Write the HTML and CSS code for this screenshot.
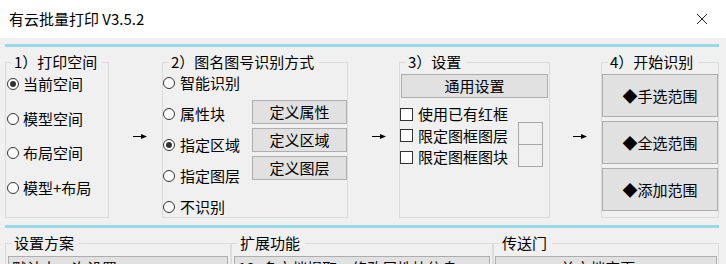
FILE: index.html
```html
<!DOCTYPE html>
<html lang="zh">
<head>
<meta charset="utf-8">
<title>有云批量打印 V3.5.2</title>
<link rel="stylesheet" href="styles.css">
</head>
<body>
<div class="titlebar">
  <span class="title">有云批量打印 V3.5.2</span>
  <svg class="close" width="12" height="12" viewBox="0 0 12 12"><path d="M1 1L11 11M11 1L1 11" stroke="#222" stroke-width="1" fill="none"/></svg>
</div>
<div class="sep"></div>
<div class="main">
  <fieldset class="grp g1">
    <legend>1）打印空间</legend>
    <div class="radios r1">
      <label class="radio on"><i></i>当前空间</label>
      <label class="radio"><i></i>模型空间</label>
      <label class="radio"><i></i>布局空间</label>
      <label class="radio"><i></i>模型+布局</label>
    </div>
  </fieldset>
  <div class="arrow a1"><svg width="14" height="7" viewBox="0 0 14 7"><path d="M0 3.5H10" stroke="#000" stroke-width="1"/><path d="M8 1L14 3.5L8 6Z" fill="#000"/></svg></div>
  <fieldset class="grp g2">
    <legend>2）图名图号识别方式</legend>
    <div class="g2body">
      <div class="radios r2">
        <label class="radio"><i></i>智能识别</label>
        <label class="radio"><i></i>属性块</label>
        <label class="radio on"><i></i>指定区域</label>
        <label class="radio"><i></i>指定图层</label>
        <label class="radio"><i></i>不识别</label>
      </div>
      <div class="defbtns">
        <div class="btn def">定义属性</div>
        <div class="btn def">定义区域</div>
        <div class="btn def">定义图层</div>
      </div>
    </div>
  </fieldset>
  <div class="arrow a2"><svg width="14" height="7" viewBox="0 0 14 7"><path d="M0 3.5H10" stroke="#000" stroke-width="1"/><path d="M8 1L14 3.5L8 6Z" fill="#000"/></svg></div>
  <fieldset class="grp g3">
    <legend>3）设置</legend>
    <div class="btn general">通用设置</div>
    <div class="g3body">
      <div class="checks">
        <label class="check"><i></i>使用已有红框</label>
        <label class="check"><i></i>限定图框图层</label>
        <label class="check"><i></i>限定图框图块</label>
      </div>
      <div class="swatches">
        <div class="swatch"></div>
        <div class="swatch"></div>
      </div>
    </div>
  </fieldset>
  <div class="arrow a3"><svg width="14" height="7" viewBox="0 0 14 7"><path d="M0 3.5H10" stroke="#000" stroke-width="1"/><path d="M8 1L14 3.5L8 6Z" fill="#000"/></svg></div>
  <fieldset class="grp g4">
    <legend>4）开始识别</legend>
    <div class="startbtns">
      <div class="btn big">◆手选范围</div>
      <div class="btn big">◆全选范围</div>
      <div class="btn big">◆添加范围</div>
    </div>
  </fieldset>
</div>
<div class="sep sep2"></div>
<div class="bottom">
  <fieldset class="grp b1">
    <legend>设置方案</legend>
    <div class="combo"><span>默认上一次设置</span><svg width="9" height="5" viewBox="0 0 9 5"><path d="M0.5 0.5L4.5 4.5L8.5 0.5" stroke="#444" fill="none"/></svg></div>
  </fieldset>
  <fieldset class="grp b2">
    <legend>扩展功能</legend>
    <div class="combo"><span>18. 多文档提取、修改属性块信息</span><svg width="9" height="5" viewBox="0 0 9 5"><path d="M0.5 0.5L4.5 4.5L8.5 0.5" stroke="#444" fill="none"/></svg></div>
  </fieldset>
  <fieldset class="grp b3">
    <legend>传送门</legend>
    <div class="btn portal">单文档定页&gt;&gt;</div>
  </fieldset>
</div>
</body>
</html>
```
FILE: styles.css
```css
* { box-sizing: border-box; }
html, body { margin: 0; padding: 0; }
body {
  width: 726px;
  height: 264px;
  overflow: hidden;
  background: #f0f0f0;
  font-family: "Noto Sans CJK SC", "Noto Sans", sans-serif;
  font-size: 15px;
  color: #000;
}
.titlebar {
  height: 38px;
  background: #fff;
  display: flex;
  align-items: center;
  justify-content: space-between;
  padding: 0 18px 0 9px;
}
.title { font-size: 15px; line-height: 20px; }
.close { display: block; }
.sep {
  height: 3px;
  margin: 6px 0 0 5px;
  width: 714px;
  background: #99d9ea;
}
.sep2 { margin-top: 7px; }
.main {
  display: flex;
  margin: 5px 0 0 5px;
  height: 166px;
}
.grp {
  margin: 0;
  padding: 0;
  border: 1px solid #dcdcdc;
  min-width: 0;
  height: 166px;
}
legend {
  margin-left: 6px;
  padding: 0 5px 0 2px;
  font-size: 15px;
  line-height: 20px;
  height: 20px;
}
.g1 { width: 104px; }
.g2 { width: 186px; }
.g3 { width: 151px; }
.g4 { width: 118px; }
.arrow {
  display: flex;
  align-items: center;
  padding-left: 24px;
  padding-top: 3px;
}
.arrow svg { display: block; }
.a1 { width: 53px; }
.a2 { width: 51px; }
.a3 { width: 51px; padding-left: 23px; }

.radios { display: flex; flex-direction: column; }
.r1 { margin-top: 2px; gap: 14.7px; }
.r2 { margin-top: 1px; gap: 11px; }
.radio {
  display: flex;
  align-items: center;
  height: 20px;
  line-height: 20px;
  white-space: nowrap;
}
.radio i {
  width: 12px;
  height: 12px;
  border: 1px solid #333;
  border-radius: 50%;
  background: #fff;
  margin-right: 4px;
  margin-left: 1px;
  display: flex;
  align-items: center;
  justify-content: center;
}
.r2 .radio i { margin-left: 0; margin-right: 5px; }
.radio.on i::after {
  content: "";
  width: 6px;
  height: 6px;
  border-radius: 50%;
  background: #333;
}
.g2body { display: flex; justify-content: space-between; }
.btn {
  background: #e1e1e1;
  border: 1px solid #adadad;
  display: flex;
  align-items: center;
  justify-content: center;
  font-size: 15px;
  line-height: 20px;
  white-space: nowrap;
}
.defbtns {
  display: flex;
  flex-direction: column;
  gap: 4px;
  margin-top: 28px;
}
.def { width: 95px; height: 24px; }
.general { margin: 2px 1px 0; height: 24px; }
.g3body {
  display: flex;
  justify-content: space-between;
  padding-right: 6px;
  margin-top: 6px;
}
.checks { display: flex; flex-direction: column; gap: 1.5px; }
.check {
  display: flex;
  align-items: center;
  height: 20px;
  line-height: 20px;
  white-space: nowrap;
}
.check i {
  width: 13px;
  height: 13px;
  border: 1px solid #333;
  background: #fff;
  margin-right: 5px;
}
.swatches { margin-top: 18px; display: flex; flex-direction: column; }
.swatch {
  width: 25px;
  height: 23px;
  border: 1px solid #a8a8a8;
  background: #f0f0f0;
}
.swatch + .swatch { margin-top: -1px; }
.startbtns {
  display: flex;
  flex-direction: column;
  gap: 4px;
  margin-top: 2px;
}
.big { height: 43px; }

.bottom {
  display: flex;
  margin: 5px 0 0 5px;
}
.bottom .grp { height: 60px; }
.b1 { width: 226px; }
.b2 { width: 262px; }
.b3 { width: 226px; }
.combo {
  margin: 3px 2px 0;
  height: 24px;
  background: #e1e1e1;
  border: 1px solid #adadad;
  display: flex;
  align-items: center;
  justify-content: space-between;
  padding: 0 7px 0 3px;
  line-height: 20px;
  white-space: nowrap;
}
.combo svg { display: block; }
.portal { margin: 3px 1px 0; height: 24px; }
```
